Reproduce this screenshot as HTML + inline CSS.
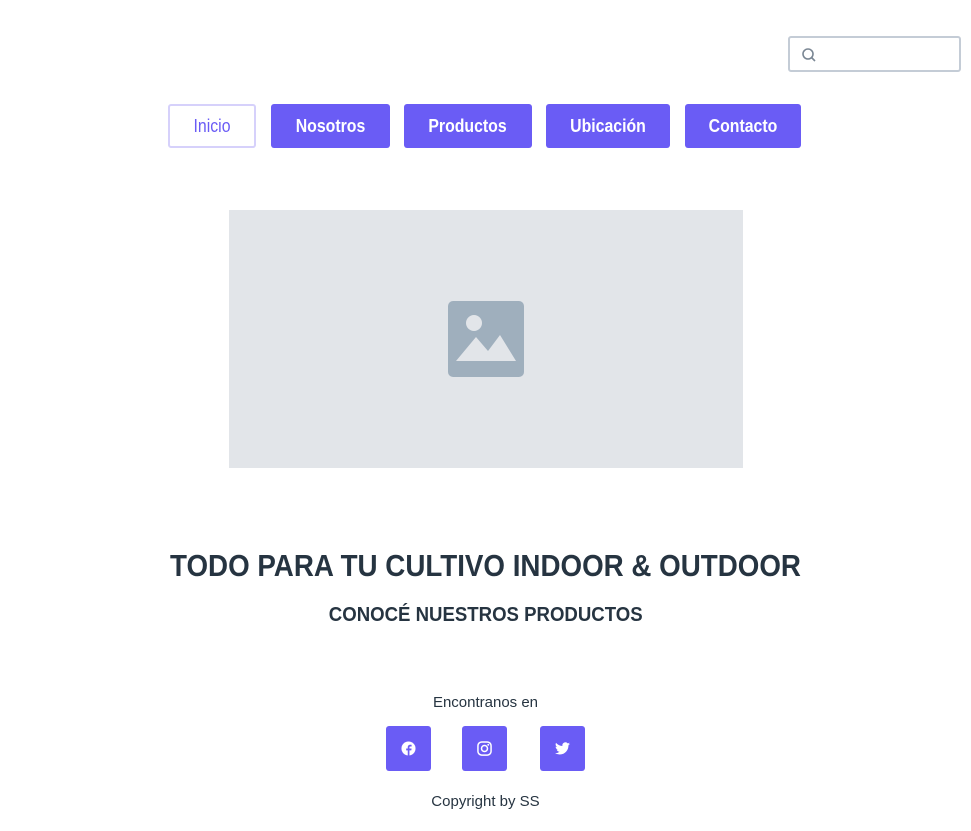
<!DOCTYPE html>
<html><head><meta charset="utf-8"><style>
*{box-sizing:border-box;margin:0;padding:0}
body{width:971px;height:831px;background:#fff;font-family:"Liberation Sans",sans-serif;position:relative;overflow:hidden;color:#263441}
.search{position:absolute;left:788px;top:36px;width:173px;height:36px;border:2px solid #c4ccd6;border-radius:3px}
.btn{position:absolute;top:104px;height:44px;border-radius:3px;background:#6a5cf5;color:#fff;font-weight:bold;font-size:18px;display:flex;align-items:center;justify-content:center}
.btn span,.t span{display:inline-block;transform:scaleX(.88)}
.img{position:absolute;left:229px;top:210px;width:514px;height:258px;background:#e2e5e9}
.soc{position:absolute;top:726px;width:45px;height:45px;background:#6a5cf5;border-radius:3px;display:flex;align-items:center;justify-content:center}
.t{position:absolute;left:0;width:971px;text-align:center}
</style></head><body>
<div class="search"><svg style="position:absolute;left:11px;top:9px" width="16" height="16" viewBox="0 0 16 16"><circle cx="7" cy="7" r="5" fill="none" stroke="#7b8794" stroke-width="1.6"/><path d="M10.5 10.5L14 14" stroke="#7b8794" stroke-width="1.6"/></svg></div>
<div class="btn" style="left:168px;width:88px;background:#fff;border:2px solid #d6d1fb;color:#6a5cf5;font-weight:normal"><span>Inicio</span></div>
<div class="btn" style="left:271px;width:119px"><span>Nosotros</span></div>
<div class="btn" style="left:404px;width:128px"><span>Productos</span></div>
<div class="btn" style="left:546px;width:124px"><span>Ubicación</span></div>
<div class="btn" style="left:685px;width:116px"><span>Contacto</span></div>
<div class="img"><svg style="position:absolute;left:219px;top:91px" width="76" height="76" viewBox="0 0 76 76"><rect width="76" height="76" rx="5" fill="#9fafbd"/><circle cx="26" cy="22" r="8" fill="#e2e5e9"/><path d="M8 60L28 36L40 50L52 34L68 60Z" fill="#e2e5e9"/></svg></div>
<div class="t" style="top:548px;font-size:31px;font-weight:bold"><span style="transform:scaleX(.895)">TODO PARA TU CULTIVO INDOOR &amp; OUTDOOR</span></div>
<div class="t" style="top:604px;font-size:20px;font-weight:bold"><span style="transform:scaleX(.93)">CONOCÉ NUESTROS PRODUCTOS</span></div>
<div class="t" style="top:694px;font-size:15px"><span style="transform:none">Encontranos en</span></div>
<div class="soc" style="left:386px"><svg width="15" height="15" viewBox="0 0 16 16"><circle cx="8" cy="8" r="7.5" fill="#fff"/><path d="M9 16V10h2l.3-2H9V6.8c0-.6.3-1 1-1h1.3V4.1C11 4 10.4 4 9.8 4 8.3 4 7.2 4.9 7.2 6.5V8H5.5v2h1.7v6z" fill="#6a5cf5"/></svg></div>
<div class="soc" style="left:462px"><svg width="15" height="15" viewBox="0 0 16 16"><rect x="1" y="1" width="14" height="14" rx="4" fill="none" stroke="#fff" stroke-width="1.6"/><circle cx="8" cy="8" r="3.2" fill="none" stroke="#fff" stroke-width="1.6"/><circle cx="12" cy="4" r="1" fill="#fff"/></svg></div>
<div class="soc" style="left:540px"><svg width="15" height="13" viewBox="0 0 24 20"><path d="M24 2.4c-.9.4-1.8.7-2.8.8 1-.6 1.8-1.6 2.2-2.7-1 .6-2 1-3.1 1.2A4.9 4.9 0 0 0 11.9 6 14 14 0 0 1 1.7.9a4.9 4.9 0 0 0 1.5 6.6c-.8 0-1.6-.3-2.2-.6 0 2.4 1.7 4.4 3.9 4.8-.7.2-1.5.2-2.2.1.6 2 2.4 3.4 4.6 3.4A9.9 9.9 0 0 1 0 17.3 14 14 0 0 0 7.5 19.5c9 0 14-7.5 14-14v-.6c1-.7 1.8-1.6 2.5-2.5z" fill="#fff"/></svg></div>
<div class="t" style="top:793px;font-size:15px"><span style="transform:none">Copyright by SS</span></div>
</body></html>
